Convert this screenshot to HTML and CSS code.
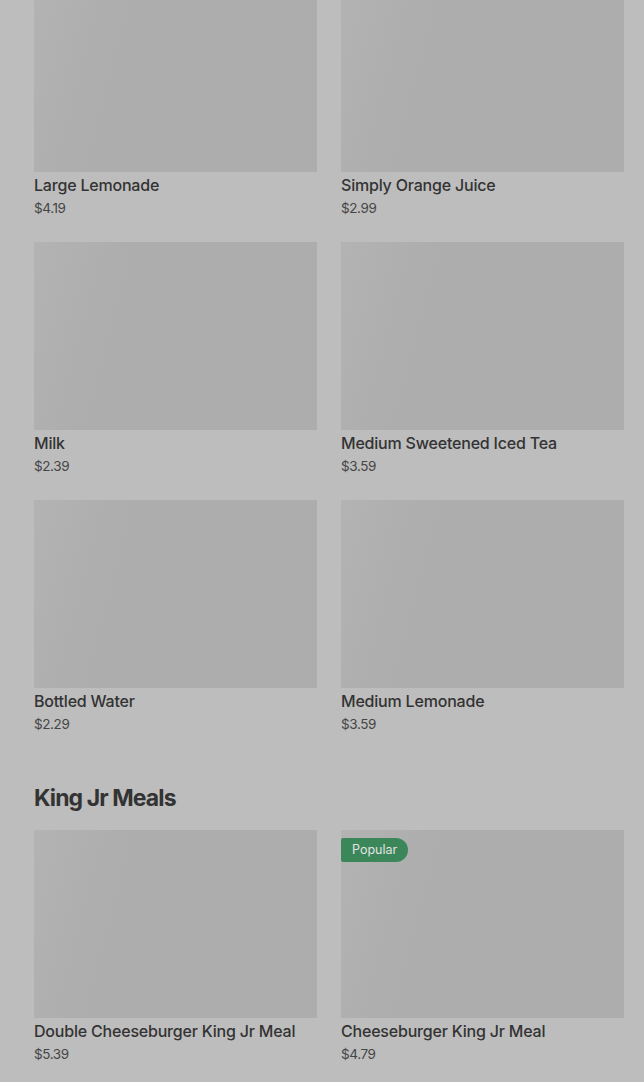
FILE: index.html
```html
<!DOCTYPE html>
<html lang="en">
<head>
    <meta charset="UTF-8">
    <meta name="viewport" content="width=device-width, initial-scale=1.0">
    <title>Menu</title>
    <link rel="stylesheet" href="styles.css">
</head>
<body>
    <div id="menu">
        <section class="menu-section first">
            <div class="item-grid">
                <div class="item-card">
                    <div class="item-image"></div>
                    <p class="item-title">Large Lemonade</p>
                    <p class="item-price">$4.19</p>
                </div>
                <div class="item-card">
                    <div class="item-image"></div>
                    <p class="item-title">Simply Orange Juice</p>
                    <p class="item-price">$2.99</p>
                </div>
                <div class="item-card">
                    <div class="item-image"></div>
                    <p class="item-title">Milk</p>
                    <p class="item-price">$2.39</p>
                </div>
                <div class="item-card">
                    <div class="item-image"></div>
                    <p class="item-title">Medium Sweetened Iced Tea</p>
                    <p class="item-price">$3.59</p>
                </div>
                <div class="item-card">
                    <div class="item-image"></div>
                    <p class="item-title">Bottled Water</p>
                    <p class="item-price">$2.29</p>
                </div>
                <div class="item-card">
                    <div class="item-image"></div>
                    <p class="item-title">Medium Lemonade</p>
                    <p class="item-price">$3.59</p>
                </div>
            </div>
        </section>

        <section class="menu-section">
            <h2 class="section-title">King Jr Meals</h2>
            <div class="item-grid">
                <div class="item-card">
                    <div class="item-image"></div>
                    <p class="item-title">Double Cheeseburger King Jr Meal</p>
                    <p class="item-price">$5.39</p>
                </div>
                <div class="item-card">
                    <div class="item-image">
                        <span class="badge">Popular</span>
                    </div>
                    <p class="item-title">Cheeseburger King Jr Meal</p>
                    <p class="item-price">$4.79</p>
                </div>
            </div>
        </section>
    </div>
</body>
</html>
```

FILE: styles.css
```css
:root {
    --backdrop: #bdbdbd;
    --image-color: #adadad;
    --image-light: #b3b3b3;
    --title-color: #333333;
    --price-color: #454545;
    --badge-color: #3b875a;
    --badge-text: #e3e3e3;
}

body {
    margin: 0;
    background-color: var(--backdrop);
    font-family: Inter, "Noto Sans", sans-serif;
    overflow: hidden;
}

#menu {
    padding: 0 20px 0 34px;
}

.menu-section.first {
    margin-top: -16px;
}

.section-title {
    margin: 48px 0 16px;
    font-size: 23px;
    line-height: 32px;
    font-weight: 700;
    letter-spacing: -0.9px;
    color: var(--title-color);
}

.item-grid {
    display: grid;
    grid-template-columns: 1fr 1fr;
    column-gap: 24px;
    row-gap: 24px;
}

.item-image {
    position: relative;
    height: 188px;
    background: linear-gradient(105deg, var(--image-light) 0%, var(--image-color) 30%, var(--image-color) 100%);
}

.item-title {
    margin: 3px 0 0;
    font-size: 16px;
    line-height: 20px;
    font-weight: 500;
    letter-spacing: -0.2px;
    color: var(--title-color);
}

.item-price {
    margin: 3px 0 0;
    font-size: 13.5px;
    line-height: 20px;
    color: var(--price-color);
    letter-spacing: -0.4px;
}

.badge {
    position: absolute;
    top: 8px;
    left: 0;
    padding: 0 11px;
    height: 24px;
    line-height: 24px;
    font-size: 12.5px;
    color: var(--badge-text);
    background-color: var(--badge-color);
    border-radius: 2px 12px 12px 2px;
}
```
